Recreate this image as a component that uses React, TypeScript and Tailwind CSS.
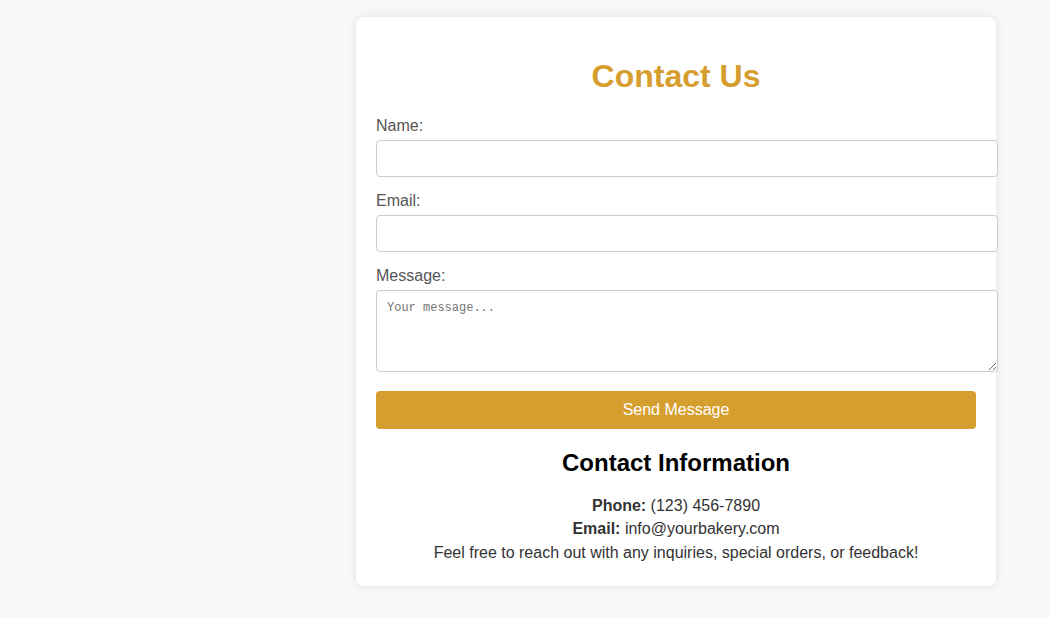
export default function App() {
  return (
    <div className="min-h-screen w-full bg-[#f8f8f8] pt-[17px] pl-[356px] pb-[31px]" style={{ fontFamily: '"Liberation Sans", Arial, sans-serif' }}>
      <div className="w-[640px] rounded-lg bg-white p-5 shadow-[0_0_10px_rgba(0,0,0,0.1)]">
        <h2 className="mt-[21px] mb-[22px] text-center text-[32px] font-bold leading-[36.8px] text-[#d69e2e]">Contact Us</h2>
        <form onSubmit={(e) => e.preventDefault()}>
          <label className="mb-[5px] block text-[16px] leading-[18px] text-[#555]">Name:</label>
          <input type="text" className="mb-[15px] block h-[37px] w-[622px] rounded border border-[#ccc] bg-white px-[10px] text-[13px] outline-none" />
          <label className="mb-[5px] block text-[16px] leading-[18px] text-[#555]">Email:</label>
          <input type="email" className="mb-[15px] block h-[37px] w-[622px] rounded border border-[#ccc] bg-white px-[10px] text-[13px] outline-none" />
          <label className="mb-[5px] block text-[16px] leading-[18px] text-[#555]">Message:</label>
          <textarea
            placeholder="Your message..."
            className="mb-[19px] block h-[82px] w-[622px] resize-y rounded border border-[#ccc] bg-white px-[10px] py-[10px] text-[12px] leading-[15px] outline-none placeholder:text-[#757575]"
            style={{ fontFamily: '"Liberation Mono", "DejaVu Sans Mono", monospace' }}
          />
          <button type="submit" className="block h-[38px] w-[600px] rounded bg-[#d69e2e] text-[16px] text-white">Send Message</button>
        </form>
        <h3 className="mt-[20px] mb-[20.5px] text-center text-[24px] font-bold leading-[27.6px] text-black">Contact Information</h3>
        <div className="text-center text-[16px] leading-[18.4px] text-[#333]">
          <p className="mb-[5px]"><strong>Phone:</strong> (123) 456-7890</p>
          <p className="mb-[5px]"><strong>Email:</strong> info@yourbakery.com</p>
          <p className="mb-[4px]">Feel free to reach out with any inquiries, special orders, or feedback!</p>
        </div>
      </div>
    </div>
  );
}
